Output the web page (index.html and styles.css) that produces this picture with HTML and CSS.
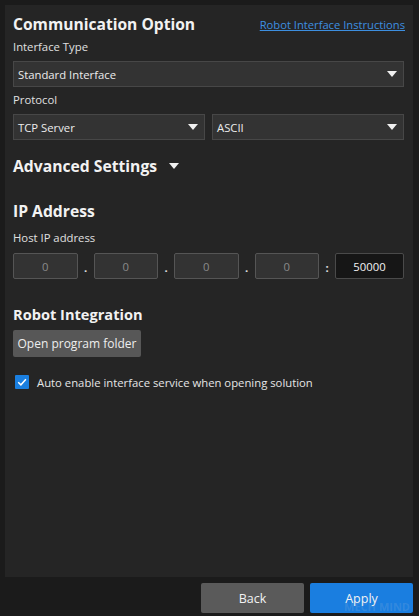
FILE: index.html
```html
<!DOCTYPE html>
<html>
<head>
<meta charset="utf-8">
<link rel="stylesheet" href="styles.css">
</head>
<body>
<div class="app">
  <div class="panel">
    <div class="header">
      <h1 class="title">Communication Option</h1>
      <a class="link" href="#">Robot Interface Instructions</a>
    </div>
    <div class="label l1">Interface Type</div>
    <div class="select s1"><span>Standard Interface</span><i class="tri"></i></div>
    <div class="label l2">Protocol</div>
    <div class="pair">
      <div class="select"><span>TCP Server</span><i class="tri"></i></div>
      <div class="select"><span>ASCII</span><i class="tri"></i></div>
    </div>
    <div class="title adv">Advanced Settings <i class="tri big"></i></div>
    <div class="title ip">IP Address</div>
    <div class="label l3">Host IP address</div>
    <div class="iprow">
      <div class="ipbox">0</div><div class="sep">.</div>
      <div class="ipbox">0</div><div class="sep">.</div>
      <div class="ipbox">0</div><div class="sep">.</div>
      <div class="ipbox">0</div><div class="sep">:</div>
      <div class="port">50000</div>
    </div>
    <div class="title robot">Robot Integration</div>
    <div class="btn folder">Open program folder</div>
    <label class="check">
      <span class="box"><svg viewBox="0 0 14 14" width="14" height="14"><path d="M3.2 7.2 L5.9 9.8 L10.9 4.2" fill="none" stroke="#fff" stroke-width="1.5"/></svg></span>
      <span>Auto enable interface service when opening solution</span>
    </label>
  </div>
  <div class="footer">
    <div class="fbtn back">Back</div>
    <div class="fbtn apply">Apply<span class="watermark">MECH MIND</span></div>
  </div>
</div>
</body>
</html>
```
FILE: styles.css
```css
* { box-sizing: border-box; }
html, body { margin: 0; padding: 0; }
body {
  background: #1b1b1b;
  font-family: "Open Sans", "Noto Sans", sans-serif;
  font-size: 11.3px;
  color: #e6e6e6;
  width: 419px;
  height: 616px;
  overflow: hidden;
}
.app { position: relative; width: 419px; height: 616px; }
.panel {
  margin: 5px 6px 0 5px;
  height: 572px;
  background: #252525;
  padding: 8px 9px 0 8px;
}
.header {
  display: flex;
  justify-content: space-between;
  align-items: center;
  height: 22px;
}
.title {
  margin: 0;
  font-size: 15.7px;
  font-weight: 700;
  line-height: 22px;
  color: #f2f2f2;
  white-space: nowrap;
}
.header .title { font-size: 15.6px; }
.robot.title { font-size: 14.6px; }
.link {
  color: #3d8fe0;
  font-size: 11.2px;
  text-decoration: underline;
  margin-right: -1px;
}
.label { line-height: 18px; height: 18px; color: #e0e0e0; }
.l1 { margin-top: 3px; }
.l2 { margin-top: 4px; }
.select {
  height: 26px;
  background: #333333;
  border: 1px solid #474747;
  display: flex;
  align-items: center;
  justify-content: space-between;
  padding: 0 6px 0 4px;
  color: #ececec;
}
.s1 { margin-top: 5px; }
.pair {
  margin-top: 5px;
  display: grid;
  grid-template-columns: 1fr 1fr;
  gap: 7px;
}
.tri {
  display: block;
  width: 0; height: 0;
  border-left: 5px solid transparent;
  border-right: 5px solid transparent;
  border-top: 6px solid #f0f0f0;
}
.tri.big { display: inline-block; vertical-align: middle; margin-left: 8px; margin-top: -3px; }
.adv { margin-top: 15px; }
.ip { margin-top: 23px; }
.l3 { margin-top: 7px; }
.iprow {
  margin-top: 6px;
  display: grid;
  grid-template-columns: 1fr 16px 1fr 16px 1fr 16px 1fr 16px 69px;
  height: 26px;
}
.ipbox {
  background: #333333;
  border: 1px solid #555555;
  border-radius: 2px;
  display: flex; align-items: center; justify-content: center;
  color: #8a8a8a;
}
.sep {
  display: flex; align-items: center; justify-content: center;
  color: #e0e0e0;
  font-weight: 700;
  padding-top: 3px;
}
.port {
  background: #161616;
  border: 1px solid #4a4a4a;
  border-radius: 2px;
  display: flex; align-items: center; justify-content: center;
  color: #f2f2f2;
}
.robot { margin-top: 24px; }
.btn {
  display: flex;
  align-items: center;
  justify-content: center;
  background: #575757;
  border-radius: 2px;
  height: 27px;
  width: 128px;
  white-space: nowrap;
  color: #eeeeee;
  font-size: 12px;
}
.folder { margin-top: 5px; }
.check {
  margin-top: 16px;
  display: flex;
  align-items: center;
  height: 18px;
  padding-left: 2px;
  gap: 8px;
  color: #e6e6e6;
}
.box {
  width: 14px; height: 14px;
  background: #1a7fe0;
  border-radius: 1px;
  display: block;
}
.box svg { display: block; }
.footer {
  display: flex;
  justify-content: flex-end;
  gap: 6px;
  padding: 6px 6px 0 0;
}
.fbtn {
  position: relative;
  width: 103px;
  height: 30px;
  border-radius: 2px;
  display: flex; align-items: center; justify-content: center;
  font-size: 12.5px;
  color: #f2f2f2;
}
.back { background: #5a5a5a; }
.apply { background: #1a7ee0; }
.watermark {
  position: absolute;
  right: 3px;
  bottom: 0;
  font-size: 11px;
  line-height: 12px;
  font-weight: 700;
  color: rgba(210, 210, 210, 0.14);
  pointer-events: none;
}
```
